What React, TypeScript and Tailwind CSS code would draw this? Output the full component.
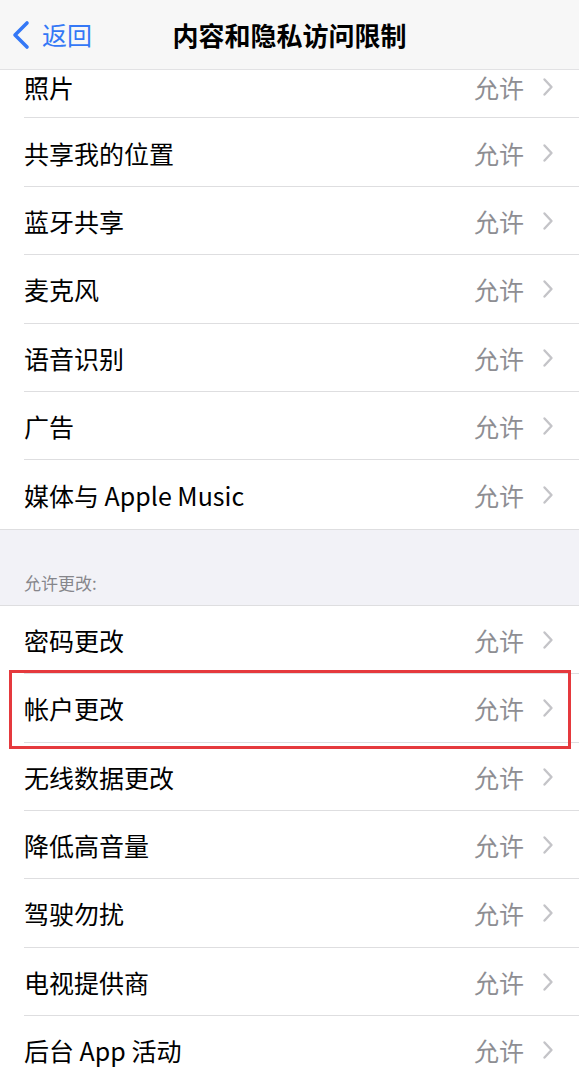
import React from "react";

const FONT = '"Noto Sans CJK SC", "Noto Sans", sans-serif';

const groupA = ["照片", "共享我的位置", "蓝牙共享", "麦克风", "语音识别", "广告", "媒体与 Apple Music"];
const groupB = ["密码更改", "帐户更改", "无线数据更改", "降低高音量", "驾驶勿扰", "电视提供商", "后台 App 活动"];

function Chevron() {
  return (
    <svg width="12" height="20" viewBox="0 0 12 20" fill="none" className="shrink-0">
      <path d="M2.5 2.5 L9.5 10 L2.5 17.5" stroke="#c4c4c8" strokeWidth="2.4" strokeLinecap="round" strokeLinejoin="round" />
    </svg>
  );
}

function Row({ label, last, first, highlighted }: { label: string; last?: boolean; first?: boolean; highlighted?: boolean }) {
  return (
    <div className="relative bg-white pl-[24px]">
      <div
        className={`flex items-center pr-[25px] ${first ? "h-[48.4px] pb-[13px]" : "h-[68.4px] pt-[1px]"} ${
          last ? "" : "border-b border-[#dedee0]"
        }`}
      >
        <span className="flex-1 text-[25px] leading-[32px] text-black">{label}</span>
        <span className="mr-[18px] text-[25px] leading-[32px] text-[#8e8e93]">允许</span>
        <Chevron />
      </div>
      {highlighted && (
        <div className="pointer-events-none absolute z-10 left-[9px] right-[8px] -top-[4px] -bottom-[6px] border-[3px] border-[#e5393d]" />
      )}
    </div>
  );
}

export default function App() {
  return (
    <div className="flex h-[1083px] w-[579px] flex-col overflow-hidden bg-[#f2f2f7]" style={{ fontFamily: FONT }}>
      <header className="relative z-10 flex h-[70px] shrink-0 items-center border-b border-[#e2e2e4] bg-[#f7f7f7]">
        <div className="flex items-center pl-[11px]">
          <svg width="20" height="30" viewBox="0 0 20 30" fill="none">
            <path d="M16 3 L4 15 L16 27" stroke="#3478f6" strokeWidth="3.6" strokeLinecap="round" strokeLinejoin="round" />
          </svg>
          <span className="ml-[11px] text-[25px] text-[#3478f6]">返回</span>
        </div>
        <h1 className="pointer-events-none absolute left-0 right-0 text-center text-[26px] font-semibold text-black">
          内容和隐私访问限制
        </h1>
      </header>

      <main className="flex-1 overflow-hidden">
        <section className="border-b border-[#dedee0] bg-white">
          {groupA.map((l, i) => (
            <Row key={l} label={l} first={i === 0} last={i === groupA.length - 1} />
          ))}
        </section>

        <div className="flex h-[75px] items-end pb-[9px] pl-[24px]">
          <span className="text-[17px] text-[#86868b]">允许更改:</span>
        </div>

        <section className="relative border-t border-[#dedee0] bg-white">
          {groupB.map((l) => (
            <Row key={l} label={l} highlighted={l === "帐户更改"} />
          ))}
        </section>
      </main>
    </div>
  );
}
